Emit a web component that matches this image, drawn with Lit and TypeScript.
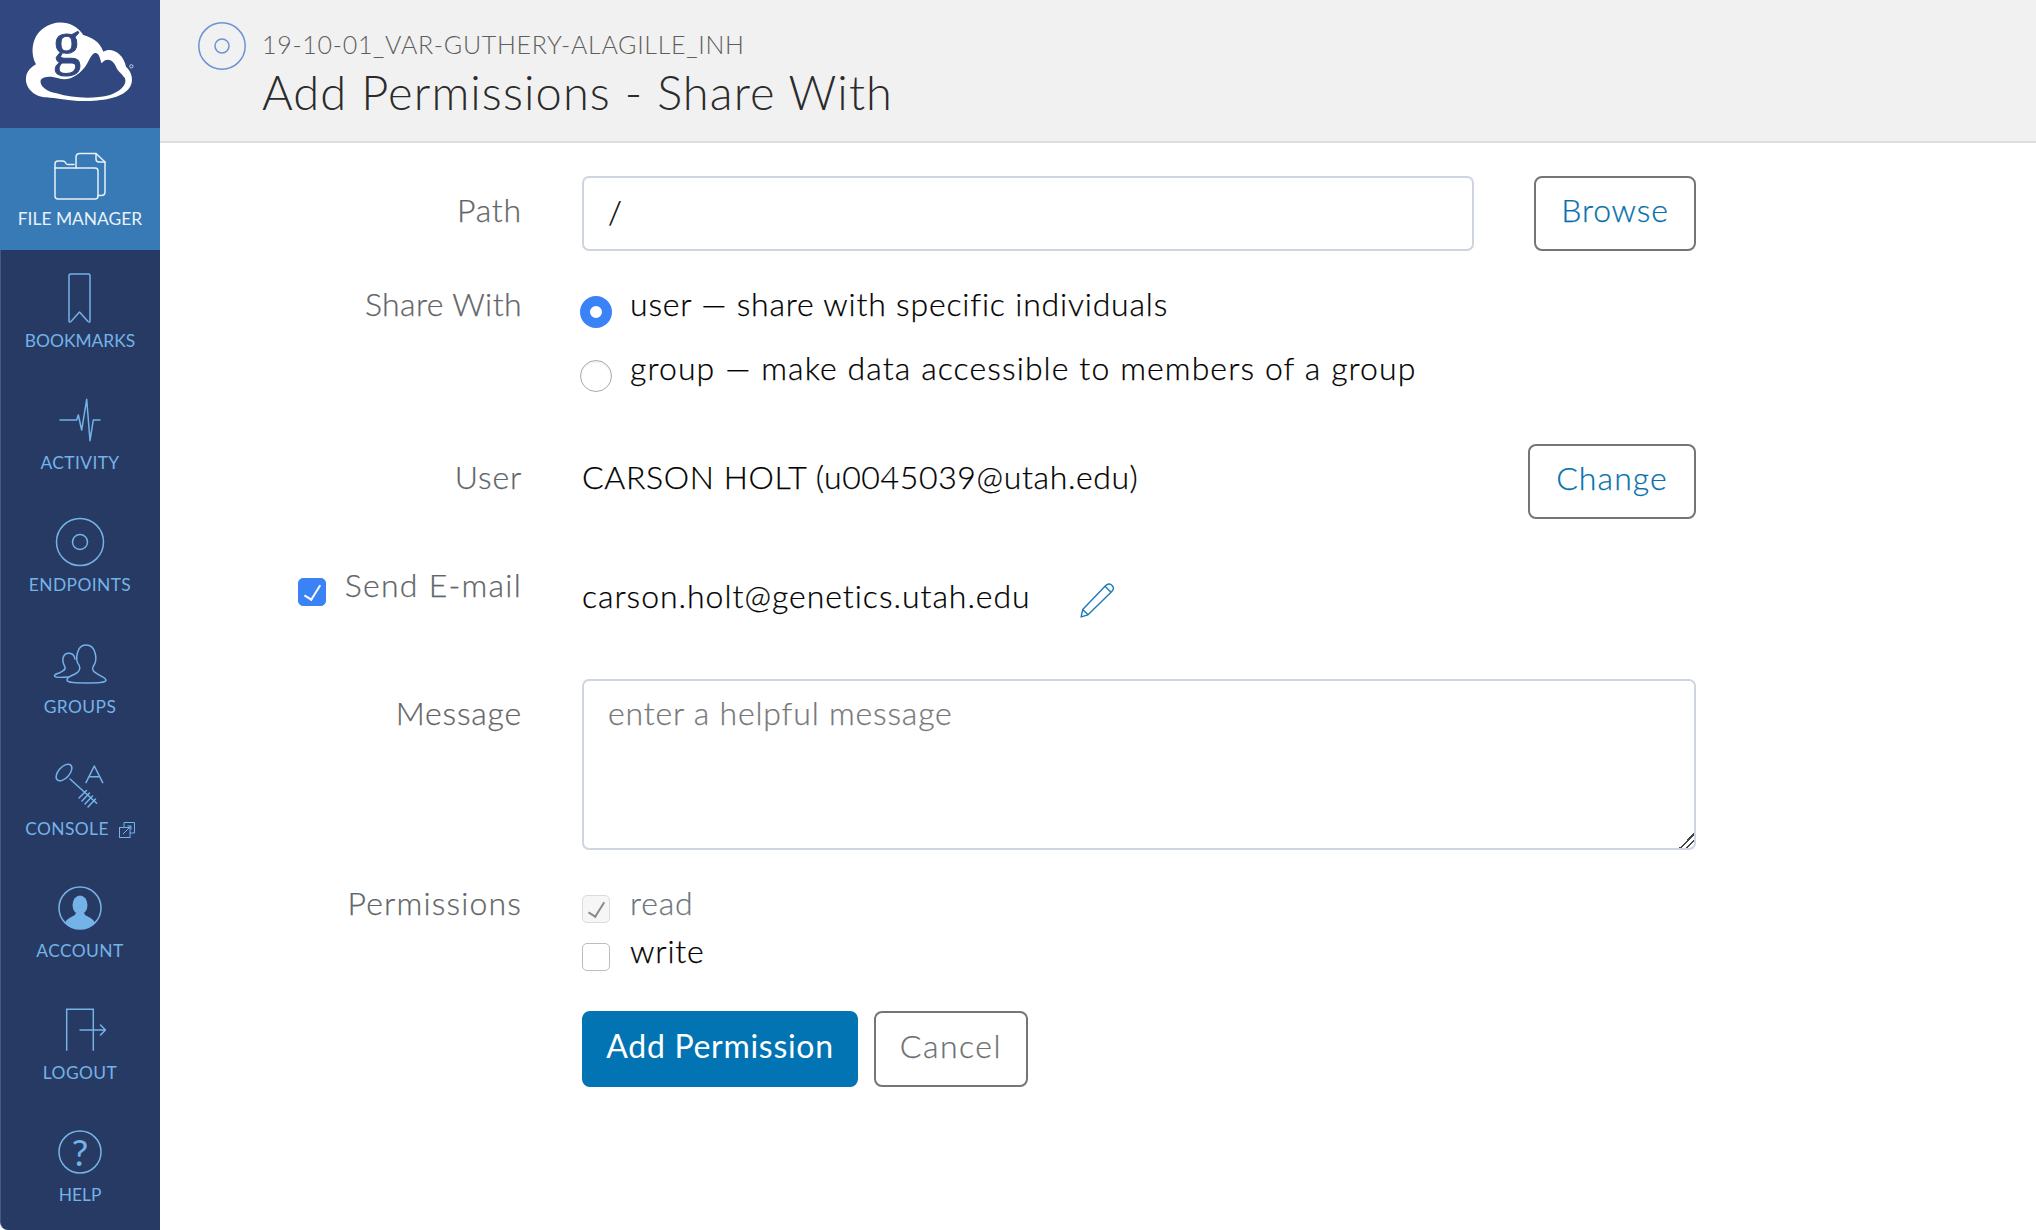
import { LitElement, html, css, svg } from "lit";
import { customElement } from "lit/decorators.js";

const S = (body: unknown, w = 64, h = 64) =>
  html`<svg width=${w} height=${h} viewBox="0 0 ${w} ${h}" fill="none" stroke="currentColor" stroke-width="1.5" stroke-linejoin="round" stroke-linecap="round">${body}</svg>`;

const icons = {
  files: svg`<path d="M7 24V20Q7 17 10 17H15Q17 17 18 19.5Q18.500 20.500 20 20.500H26"/><path d="M7 24H47Q50 24 50 27V52Q50 55 47 55H10Q7 55 7 52Z"/><path d="M28 24V13Q28 9.500 32 9.500H48L57 18V48Q57 51.500 53 51.500H50"/><path d="M48 9.500V15Q48 18 51 18H57"/>`,
  bookmark: svg`<path d="M21 9.500Q21 8 23 8H40.500Q42 8 42 10V55Q42 57 40 55.500L31.500 46L23 55.500Q21 57 21 55Z"/>`,
  activity: svg`<path d="M12 32H28.700L30.300 27L33.700 42L38.700 11.300L42 52.700L45.300 32H52"/>`,
  endpoints: svg`<circle cx="32" cy="32" r="23.500"/><circle cx="32" cy="32" r="7.500"/>`,
  groups: svg`<path d="M31 33C33 37 31 40 27 42C22 44 19 46 19 48C19 51 30 51 39 51C48 51 58 51 58 48C58 46 52 44 48 41C44 39 44 36 46 33C49 29 49 13 38 13C28 13 27 29 31 33Z"/><path d="M27 27C26 20 17 19 15 26C14 31 16 33 17 35C18 38 15 39 11 41C8 42 6 43 6.500 44C7 45.500 14 45.500 20 45"/>`,
  console: svg`<ellipse cx="16" cy="18.500" rx="10" ry="5.500" transform="rotate(-48 16 18.500)"/><path d="M22 25L48.700 49.300M31 44L38.500 36.500M34 47L41.500 39M37 50L44.500 42M40 53L47.500 45M38 28.700L46.300 12L54.700 28.700M41 22.700H51.500"/>`,
  account: svg`<circle cx="32" cy="32" r="21"/><ellipse cx="32" cy="29" rx="7.500" ry="9.500" fill="currentColor" stroke="none"/><path d="M17 47C19 41 27 41 28 37H36C37 41 45 41 47 47C39 55 25 55 17 47Z" fill="currentColor" stroke="none"/>`,
  logout: svg`<path stroke-linecap="butt" stroke-linejoin="miter" d="M18.700 52.700V11.300H45.300V52.700"/><path d="M32 32H57.500M52.500 27L57.500 32L52.500 37"/>`,
  help: svg`<circle cx="32" cy="32" r="21"/><text x="32" y="45.500" text-anchor="middle" font-family="Lato" font-size="37" font-weight="400" fill="currentColor" stroke="none">?</text>`,
};

const nav: [string, keyof typeof icons, boolean?, boolean?][] = [
  ["File Manager", "files", true],
  ["Bookmarks", "bookmark"],
  ["Activity", "activity", false, true],
  ["Endpoints", "endpoints", false, true],
  ["Groups", "groups", false, true],
  ["Console", "console", false, true],
  ["Account", "account", false, true],
  ["Logout", "logout", false, true],
  ["Help", "help"],
];

@customElement("app-root")
export class AppRoot extends LitElement {
  static styles = css`
    :host { display: block; width: 2036px; height: 1230px; font-family: Lato, "Open Sans", sans-serif; font-weight: 300; background: #fff; color: #000; overflow: hidden; }
    * { box-sizing: border-box; }
    .page { display: flex; height: 1230px; }
    .side { width: 160px; flex: none; height: 1230px; background: #273a64; border-left: 1px solid #46597f; border-bottom-left-radius: 8px; font-weight: 400; }
    .logo { height: 128px; margin-left: -1px; background: #30487f; display: block; }
    .item { height: 122px; padding-top: 16px; margin-left: -1px; color: #74b3e8; display: flex; flex-direction: column; align-items: center; }
    .item.on { background: #377ab5; color: #e8f1f8; }
    .item svg { display: block; flex: none; }
    .lab { height: 24px; line-height: 22px; font-size: 17.4px; text-transform: uppercase; display: flex; align-items: flex-start; gap: 10px; }
    .lab.wide { letter-spacing: .4px; }
    .lab svg { margin-top: 4px; }
    .main { flex: 1; min-width: 0; }
    .head { height: 143px; background: #f1f1f1; border-bottom: 2px solid #ddd; display: flex; padding: 22px 0 0 38px; gap: 16px; }
    .disc { color: #6c93d6; flex: none; }
    .sub { font-size: 25px; line-height: 44px; color: #5e5e5e; height: 45px; letter-spacing: .7px; }
    .title { font-size: 47px; line-height: 50px; color: #2b2b2b; letter-spacing: 1.1px; }
    form { padding-top: 33px; width: 1536px; }
    .row { display: grid; grid-template-columns: 362px 1fr; column-gap: 60px; font-size: 32px; letter-spacing: .8px; -webkit-text-stroke: .25px currentColor; }
    .label { text-align: right; color: #626568; line-height: 36px; display: flex; justify-content: flex-end; align-items: flex-start; }
    .r1 .label { line-height: 67px; }
    .r2 { margin-top: 34px; }
    .r2 .label { letter-spacing: .4px; line-height: 37px; }
    .r3 { margin-top: 54px; }
    .r3 .label, .r3 .val { line-height: 66px; }
    .val { letter-spacing: .64px; }
    .r4 { margin-top: 48px; }
    .r5 { margin-top: 61px; }
    .r5 .label { padding-top: 16px; }
    .r6 { margin-top: 34px; }
    .r6 .label { letter-spacing: 1.15px; line-height: 38px; }
    .r7 { margin-top: 39px; }
    .split { display: flex; justify-content: space-between; align-items: flex-start; }
    .field { display: block; height: 75px; flex: 1; margin-right: 60px; border: 2px solid #ced4e0; border-radius: 7px; padding: 0 24px 5px; font: inherit; letter-spacing: inherit; color: #000; outline: none; background: #fff; }
    .area { display: block; width: 100%; height: 171px; border: 2px solid #ced4e0; border-radius: 7px; padding: 13px 24px; font: inherit; letter-spacing: inherit; line-height: 38px; color: #000; outline: none; background: #fff; }
    .area::placeholder { color: #75787b; opacity: 1; }
    .area::-webkit-resizer { background: linear-gradient(135deg, transparent 50%, #444 50%, #444 57%, transparent 57%, transparent 72%, #444 72%, #444 79%, transparent 79%); }
    .btn { display: block; height: 75px; border: 2px solid #757575; border-radius: 8px; background: #fff; font: inherit; letter-spacing: inherit; padding: 0 0 8px; color: #0670ad; font-weight: 300; }
    .browse { width: 162px; }
    .change { width: 168px; letter-spacing: 1.1px; }
    .opts { display: flex; flex-direction: column; gap: 25px; }
    .perm { gap: 8px; }
    .opt { display: flex; line-height: 38px; height: 40px; gap: 18px; margin: 0; }
    .opt.long { letter-spacing: 1.1px; line-height: 36px; }
    .perm .opt { gap: 20px; }
    .radio { appearance: none; margin: 11px 0 0 -2px; width: 32px; height: 32px; border-radius: 50%; background: #fff; border: 1px solid #aaa; flex: none; display: block; box-shadow: inset 0 2px 2px rgba(0,0,0,.05); }
    .long .radio { margin-top: 10px; }
    .radio:checked { background: #fff; border: 10px solid #3b82f6; box-shadow: none; }
    .check { appearance: none; margin: 11px 0 0; width: 28px; height: 28px; border-radius: 5px; border: 1px solid #bcbcbc; background: #fff; flex: none; display: block; position: relative; }
    .check::after { content: ""; position: absolute; left: 9px; top: 3px; width: 7px; height: 16px; border: solid transparent; border-width: 0 2.500px 2.500px 0; transform: rotate(32deg); }
    .check:checked::after { border-color: #8a8a8a; }
    .check.blue:checked { background: #3b82f6; border-color: #3b82f6; }
    .check.blue:checked::after { border-color: #fff; }
    .check.dis { background: #f6f6f6; border-color: #dcdcdc; }
    .muted { color: #6c757d; }
    .mail-label { gap: 19px; letter-spacing: 1.25px; }
    .mail-label .check { margin-top: 11px; }
    .mail { display: flex; align-items: flex-start; padding-top: 11px; line-height: 36px; gap: 48px; letter-spacing: .97px; }
    .pencil { color: #1a7ab8; display: block; margin-top: 4px; }
    .actions { display: flex; gap: 16px; }
    .primary { width: 276px; height: 76px; background: #0374b3; border-color: #0374b3; color: #fff; font-weight: 400; letter-spacing: .7px; -webkit-text-stroke: 0; }
    .cancel { width: 154px; height: 76px; color: #6d7073; letter-spacing: 1.5px; }
  `;

  logo() {
    return html`<svg class="logo" width="160" height="128" viewBox="0 0 480 384">
      <path fill="#fff" d="M108 193C90 160 95 110 130 85C170 55 225 65 250 105C275 112 300 125 310 155C335 140 370 160 378 200C395 215 405 245 385 268C360 298 290 305 235 303C190 300 170 295 140 292C100 292 75 260 78 235C78 215 95 200 108 193Z"/>
      <path fill="#30487f" d="M122 240C130 228 155 228 175 235C205 245 240 228 262 190C272 170 280 155 290 160C300 165 300 180 305 190C320 170 340 180 348 200C352 212 365 220 375 235C382 255 360 275 330 285C280 298 220 295 170 280C140 275 118 258 122 240Z"/>
      <text transform="translate(158 190) scale(.92 1)" font-family="Liberation Serif" font-size="185" fill="#30487f" stroke="#30487f" stroke-width="3">g</text>
      <circle cx="394" cy="199" r="5" fill="none" stroke="#dfe5ef" stroke-width="2.500"/>
    </svg>`;
  }

  render() {
    return html`<div class="page">
      <nav class="side">
        ${this.logo()}
        ${nav.map(([name, ic, on, wide]) => html`<div class="item ${on ? "on" : ""}">
          ${S(icons[ic])}
          <div class="lab ${wide ? "wide" : ""}">${name}${ic === "console" ? html`<svg width="16" height="16" viewBox="0 0 16 16" fill="none" stroke="currentColor" stroke-width="1"><path d="M5 5.500V.5H15.500V11H11"/><rect x=".5" y="5.500" width="10.500" height="10"/><path d="M4 12L12 4M8.500 4H12V7.500"/></svg>` : ""}</div>
        </div>`)}
      </nav>
      <div class="main">
        <header class="head">
          <div class="disc">${S(svg`<circle cx="24" cy="24" r="23.200"/><circle cx="24" cy="24" r="7"/>`, 48, 48)}</div>
          <div>
            <div class="sub">19-10-01_VAR-GUTHERY-ALAGILLE_INH</div>
            <div class="title">Add Permissions - Share With</div>
          </div>
        </header>
        <form>
          <div class="row r1"><div class="label">Path</div>
            <div class="split"><input class="field" value="/" /><button type="button" class="btn browse">Browse</button></div></div>
          <div class="row r2"><div class="label">Share With</div>
            <div class="opts">
              <label class="opt"><input class="radio" type="radio" name="s" checked />user — share with specific individuals</label>
              <label class="opt long"><input class="radio" type="radio" name="s" />group — make data accessible to members of a group</label>
            </div></div>
          <div class="row r3"><div class="label">User</div>
            <div class="split"><div class="val">CARSON HOLT (u0045039@utah.edu)</div><button type="button" class="btn change">Change</button></div></div>
          <div class="row r4"><label class="label mail-label"><input class="check blue" type="checkbox" checked />Send E-mail</label>
            <div class="mail">carson.holt@genetics.utah.edu
              <svg class="pencil" width="36" height="36" viewBox="0 0 34 34" fill="none" stroke="currentColor" stroke-width="1.300" stroke-linejoin="round"><path d="M2 33L3.500 26L25 3.500Q28 .5 31 3Q34 6 31 9L8.500 31Z"/><path d="M24.500 4L30 9.500M3.500 26L8.500 31"/></svg>
            </div></div>
          <div class="row r5"><div class="label">Message</div><textarea class="area" placeholder="enter a helpful message"></textarea></div>
          <div class="row r6"><div class="label">Permissions</div>
            <div class="opts perm">
              <label class="opt muted"><input class="check dis" type="checkbox" checked disabled />read</label>
              <label class="opt"><input class="check" type="checkbox" />write</label>
            </div></div>
          <div class="row r7"><div></div>
            <div class="actions"><button type="button" class="btn primary">Add Permission</button><button type="button" class="btn cancel">Cancel</button></div></div>
        </form>
      </div>
    </div>`;
  }
}
